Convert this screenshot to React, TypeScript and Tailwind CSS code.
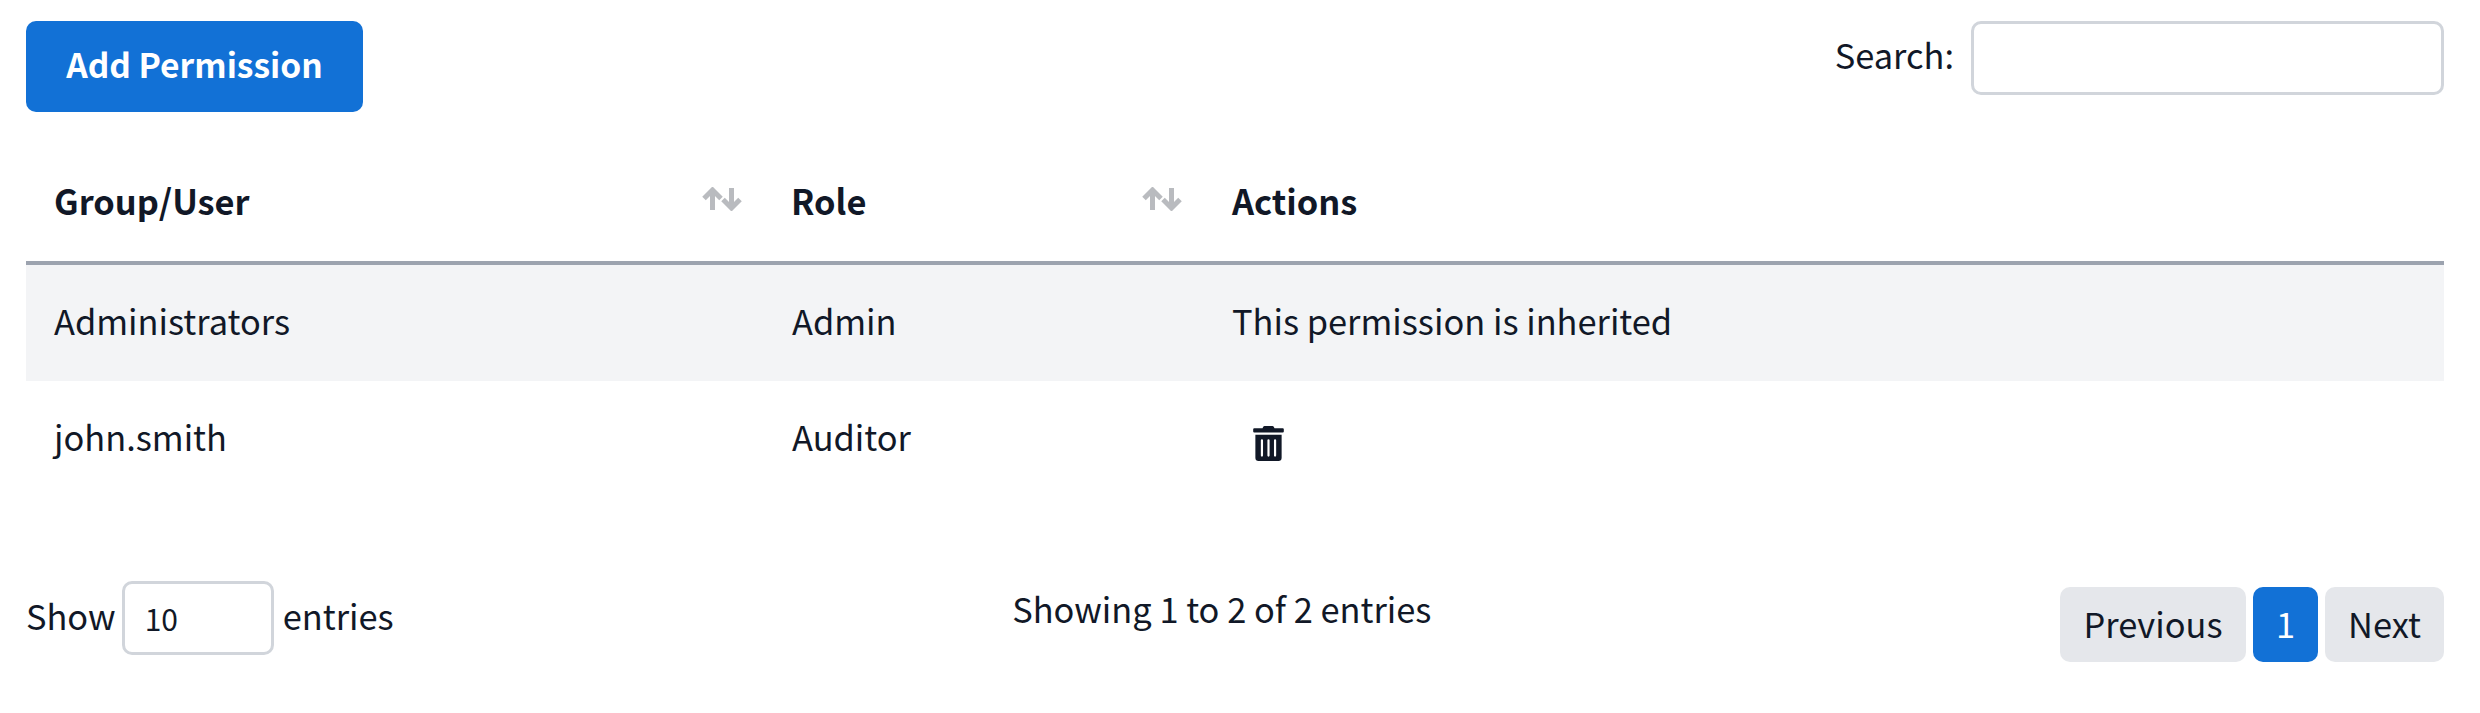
import { FaTrashAlt } from "react-icons/fa";

function SortIcon() {
  return (
    <svg className="absolute right-[21px] top-[42px]" width="40" height="24" viewBox="0 0 40 24" fill="none" stroke="#b9bbbf" strokeWidth="5">
      <path d="M10.5 23V3M2 11.5L10.5 3L19 11.5" />
      <path d="M29.5 1V21M21 12.5L29.5 21L38 12.5" />
    </svg>
  );
}

export default function App() {
  return (
    <div className="min-h-[713px] bg-white px-[26px] pt-[21px] pr-[36px] text-[34.4px] leading-[54px] text-[#111827] font-['Noto_Sans_CJK_SC','Noto_Sans',sans-serif]">
      <div className="flex items-start justify-between">
        <button className="h-[91px] w-[337px] rounded-[10px] bg-[#1271d6] pb-[5px] text-[33.6px] font-semibold text-white">Add Permission</button>
        <label className="flex h-[74px] items-center gap-[17px]">
          <span className="-mt-[8px]">Search:</span>
          <input className="h-[74px] w-[473px] rounded-[10px] border-[3px] border-[#d1d5db] bg-white outline-none" aria-label="Search" />
        </label>
      </div>
      <table className="mt-[33px] w-full table-fixed border-collapse">
        <colgroup>
          <col className="w-[737px]" />
          <col className="w-[440px]" />
          <col />
        </colgroup>
        <thead>
          <tr className="h-[118px] border-b-[4px] border-[#9ca3af] text-left">
            <th className="relative pl-[28px] pr-[28px] pb-[6px] font-bold">Group/User<SortIcon /></th>
            <th className="relative pl-[28px] pr-[28px] pb-[6px] font-bold">Role<SortIcon /></th>
            <th className="pl-[29px] pr-[28px] pb-[6px] font-bold">Actions</th>
          </tr>
        </thead>
        <tbody>
          <tr className="h-[118px] bg-[#f3f4f6]">
            <td className="pl-[28px] pr-[28px] pb-[7px]">Administrators</td>
            <td className="pl-[29px] pr-[28px] pb-[7px]">Admin</td>
            <td className="pl-[29px] pr-[28px] pb-[7px]">This permission is inherited</td>
          </tr>
          <tr className="h-[116px]">
            <td className="pl-[28px] pr-[28px] pb-[6px]">john.smith</td>
            <td className="pl-[29px] pr-[28px] pb-[6px]">Auditor</td>
            <td className="pl-[29px] pr-[28px]">
              <FaTrashAlt className="ml-[21px] mt-[8px] h-[35px] w-[31px] text-[#111827]" />
            </td>
          </tr>
        </tbody>
      </table>
      <div className="mt-[84px] flex items-start justify-between">
        <div className="flex h-[74px] items-center gap-[6px]">
          <span className="-mt-[6px]">Show</span>
          <div className="flex h-[74px] w-[152px] items-center rounded-[10px] border-[3px] border-[#d1d5db] pl-[20px] text-[30px]">10</div>
          <span className="-mt-[6px] ml-[3px]">entries</span>
        </div>
        <div className="mr-[10px]">Showing 1 to 2 of 2 entries</div>
        <div className="mt-[6px] flex gap-[7px]">
          <button className="h-[75px] w-[186px] rounded-[10px] bg-[#e5e7eb] pb-[3px]">Previous</button>
          <button className="h-[75px] w-[65px] rounded-[10px] bg-[#1271d6] pb-[3px] text-white">1</button>
          <button className="h-[75px] w-[119px] rounded-[10px] bg-[#e5e7eb] pb-[3px]">Next</button>
        </div>
      </div>
    </div>
  );
}
